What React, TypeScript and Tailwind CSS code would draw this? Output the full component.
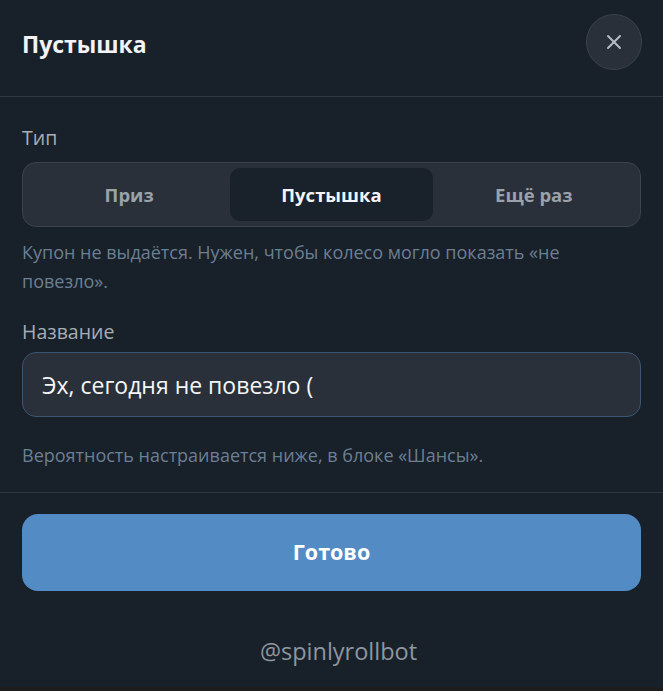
import React from "react"
import { X } from "lucide-react"

const tabs = ["Приз", "Пустышка", "Ещё раз"]

export default function App() {
    const [active, setActive] = React.useState("Пустышка")
    const [name, setName] = React.useState("Эх, сегодня не повезло (")

    return (
        <div className="w-[663px] h-[691px] bg-[#18202a] flex flex-col overflow-hidden" style={{ fontFamily: '"Open Sans", "Noto Sans", sans-serif' }}>
            <header className="h-[97px] shrink-0 flex items-center justify-between pl-[22px] pr-[21px] border-b border-[#2f3843]">
                <h1 className="text-[23px] font-bold text-[#f1f3f5] -mt-[8px]">Пустышка</h1>
                <button className="w-14 h-14 -mt-[12px] rounded-full bg-[#29303a] border border-[#3a424d] flex items-center justify-center">
                    <X size={24} color="#b6bcc3" strokeWidth={2} />
                </button>
            </header>

            <main className="px-[22px] flex flex-col">
                <label className="mt-[29px] text-[19.5px] leading-6 text-[#a7adb4]">Тип</label>
                <div className="mt-[12px] h-[65px] rounded-[14px] border border-[#3a424d] bg-[#29303a] p-[5px] grid grid-cols-3">
                    {tabs.map(t => (
                        <button
                            key={t}
                            onClick={() => setActive(t)}
                            className={
                                t === active
                                    ? "rounded-[10px] bg-[#19212b] text-[18.5px] font-bold text-[#f3f4f6]"
                                    : "rounded-[10px] text-[18.5px] font-bold text-[#9aa2ab]"
                            }
                        >
                            {t}
                        </button>
                    ))}
                </div>
                <p className="mt-[11px] text-[18px] leading-[29px] text-[#6c7f92]">
                    Купон не выдаётся. Нужен, чтобы колесо могло показать «не повезло».
                </p>

                <label className="mt-[24px] text-[19.5px] leading-6 text-[#a7adb4]">Название</label>
                <input
                    value={name}
                    onChange={e => setName(e.target.value)}
                    className="mt-[8px] h-[65px] rounded-[14px] border border-[#3b5670] bg-[#29303a] px-[19px] text-[23px] text-[#f5f6f7] outline-none"
                />
                <p className="mt-[24px] text-[18px] leading-[29px] text-[#6c7f92]">
                    Вероятность настраивается ниже, в блоке «Шансы».
                </p>
            </main>

            <div className="mt-[22px] border-t border-[#2f3843]"></div>

            <div className="px-[22px]">
                <button className="mt-[21px] w-full h-[77px] rounded-[16px] bg-[#538bc4] text-[21.5px] font-bold text-white">
                    Готово
                </button>
            </div>

            <p className="mt-[45px] pl-[14px] text-center text-[23.5px] leading-[30px] text-[#8e969f]">@spinlyrollbot</p>

            <div className="mt-auto h-[4px] bg-[#1c1c1e]"></div>
        </div>
    )
}
